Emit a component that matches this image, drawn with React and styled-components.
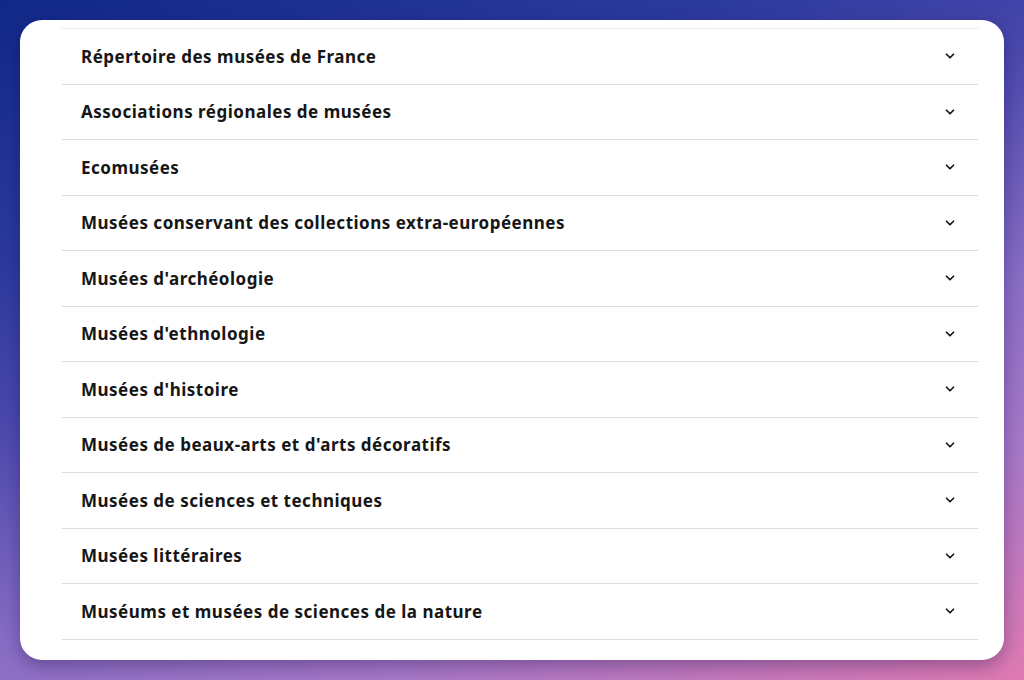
import styled, { createGlobalStyle } from "styled-components"

const GlobalStyle = createGlobalStyle`
    * {
        box-sizing: border-box;
        margin: 0;
        padding: 0;
    }
    body {
        font-family: "Noto Sans", Lato, sans-serif;
    }
`

const Page = styled.div`
    width: 1024px;
    height: 680px;
    padding: 20px;
    background: linear-gradient(160deg, #102888 0%, #2c3a9e 25%, #4a48ad 40%, #8a6ec6 62%, #a878c8 78%, #e07ab2 100%);
    overflow: hidden;
`

const Card = styled.div`
    height: 640px;
    background: #fff;
    border-radius: 22px;
    box-shadow: 0 6px 18px rgba(20, 10, 60, 0.35);
    padding: 8px 26px 0 42px;
    overflow: hidden;
`

const List = styled.ul`
    list-style: none;
    border-top: 1px solid #e9e9f3;
`

const Row = styled.li`
    height: 55.5px;
    display: flex;
    align-items: center;
    justify-content: space-between;
    padding: 0 20px 0 19px;
    border-bottom: 1px solid #dddddd;
`

const Label = styled.span`
    font-size: 17px;
    font-weight: 700;
    letter-spacing: 0.5px;
    color: #161616;
`

const Chevron = styled.svg`
    width: 14px;
    height: 14px;
    color: #161616;
    margin-right: 1px;
`

const items = [
    "Répertoire des musées de France",
    "Associations régionales de musées",
    "Ecomusées",
    "Musées conservant des collections extra-européennes",
    "Musées d'archéologie",
    "Musées d'ethnologie",
    "Musées d'histoire",
    "Musées de beaux-arts et d'arts décoratifs",
    "Musées de sciences et techniques",
    "Musées littéraires",
    "Muséums et musées de sciences de la nature",
]

export default function App() {
    return (
        <Page>
            <GlobalStyle />
            <Card>
                <List>
                    {items.map(item => (
                        <Row key={item}>
                            <Label>{item}</Label>
                            <Chevron viewBox="0 0 24 24" fill="none" stroke="currentColor" strokeWidth="3" strokeLinecap="round" strokeLinejoin="round">
                                <path d="M6 9l6 6 6-6" />
                            </Chevron>
                        </Row>
                    ))}
                </List>
            </Card>
        </Page>
    )
}
